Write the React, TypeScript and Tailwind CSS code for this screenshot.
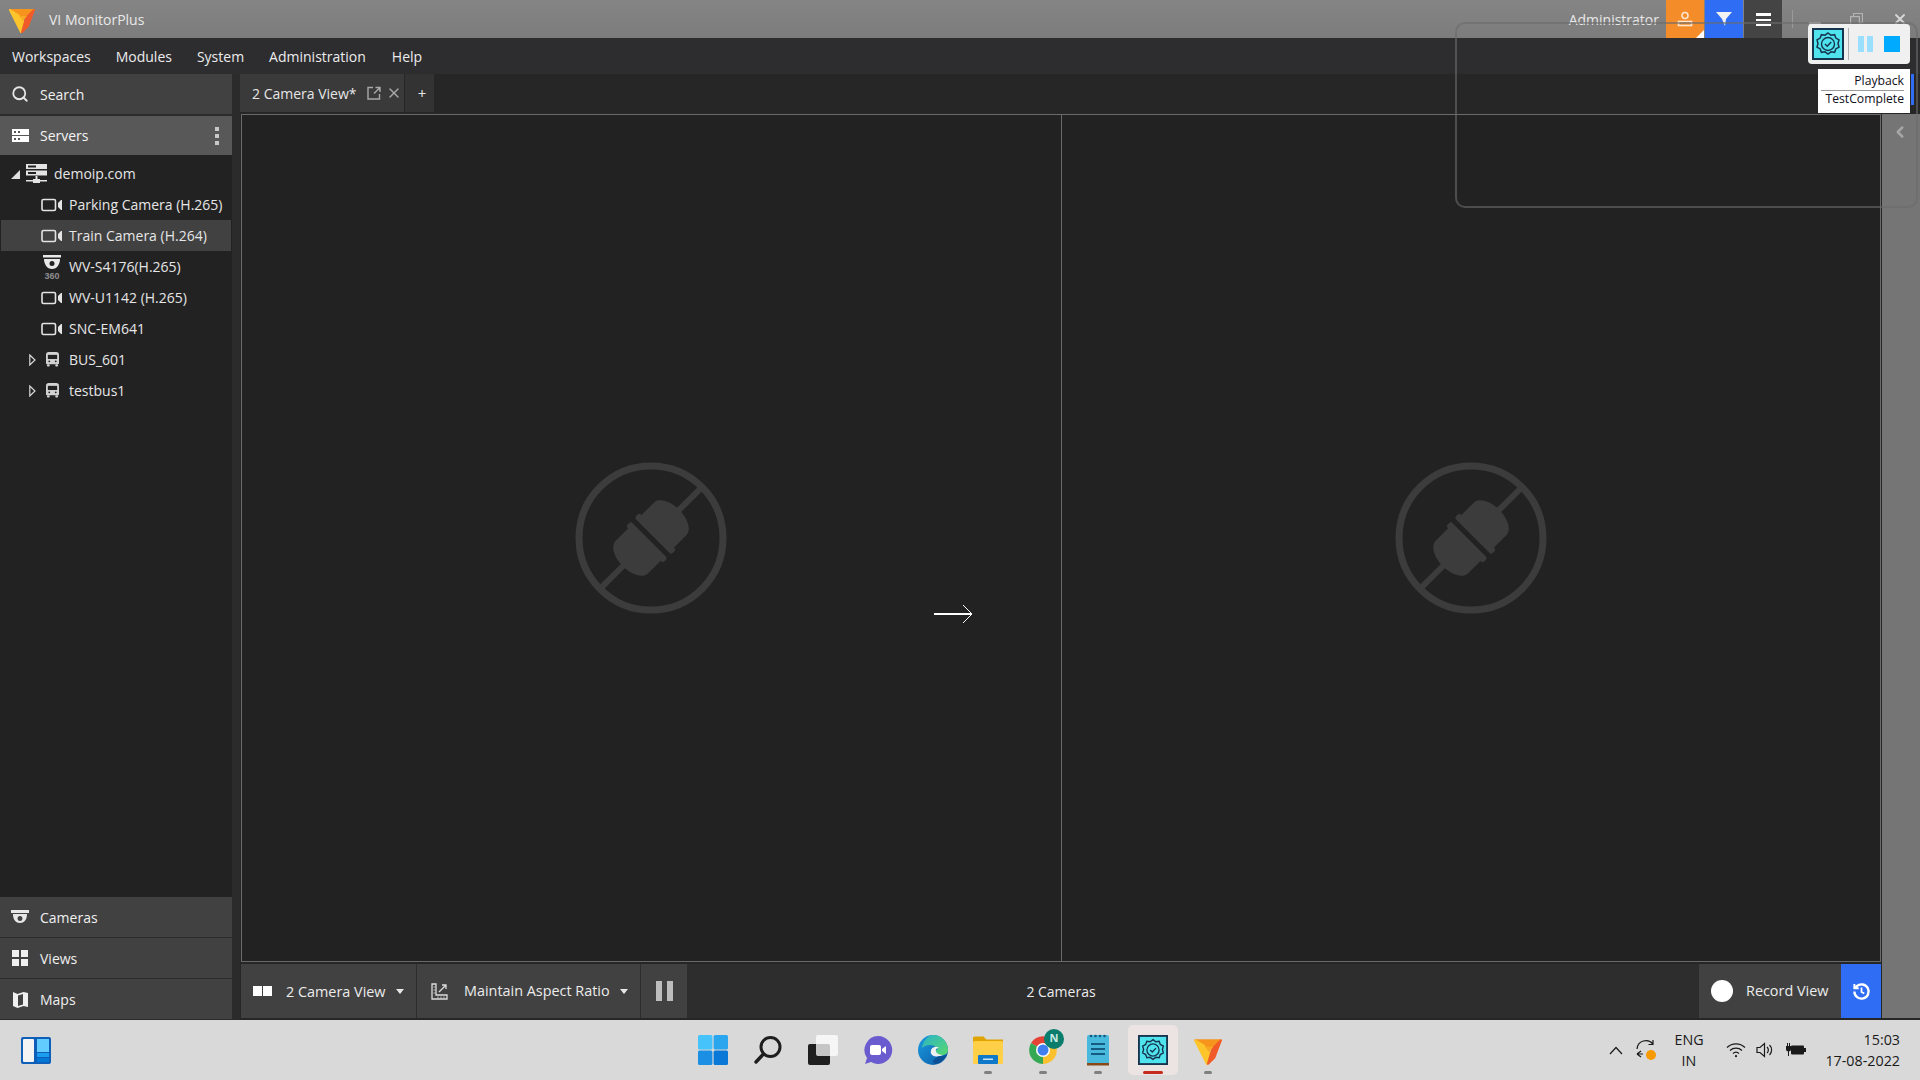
import { ChevronLeft, Search, X } from 'lucide-react';

const font = { fontFamily: '"Open Sans", "Noto Sans", sans-serif' };

function Logo({ size = 30 }: { size?: number }) {
  return (
    <svg width={size} height={size} viewBox="0 0 30 30" strokeLinejoin="round">
      <polygon points="3,6 27,6 23,13 11,12" fill="#f7941d" stroke="#f7941d" strokeWidth="2" />
      <polygon points="3,6 11,11 17,18 14,28" fill="#fdc52c" stroke="#fdc52c" strokeWidth="2" />
      <polygon points="27,6 21,22 15,28 19,14" fill="#f15a29" stroke="#f15a29" strokeWidth="2" />
      <polygon points="12,12 20,12 16,17" fill="#f9a825" />
    </svg>
  );
}

function CameraIcon() {
  return (
    <svg width="22" height="14" viewBox="0 0 22 14" fill="none" stroke="#e4e4e4" strokeWidth="1.6">
      <rect x="1" y="1.5" width="13.5" height="11" rx="1.5" />
      <path d="M17 5 l3-3 h1 v10 h-1 l-3-3 z" fill="#e4e4e4" stroke="none" />
    </svg>
  );
}

function DomeIcon() {
  return (
    <svg width="20" height="24" viewBox="0 0 20 24">
      <rect x="1" y="0" width="18" height="2.5" fill="#e8e8e8" />
      <path d="M2 4 h16 c0 5 -3 10 -8 10 s-8 -5 -8 -10 z" fill="#e8e8e8" />
      <circle cx="10" cy="8.5" r="2.5" fill="#222222" />
      <text x="10" y="23.5" fontSize="9" fontWeight="700" textAnchor="middle" fill="#8f8f8f" fontFamily="Liberation Sans, sans-serif">360</text>
    </svg>
  );
}

function BusIcon() {
  return (
    <svg width="13" height="15" viewBox="0 0 14 16">
      <path d="M3 0 h8 a3 3 0 0 1 3 3 v9 a1 1 0 0 1 -1 1 h-12 a1 1 0 0 1 -1 -1 v-9 a3 3 0 0 1 3 -3 z" fill="#d2d2d2" />
      <rect x="2" y="3" width="10" height="4.5" fill="#222222" />
      <rect x="1" y="13" width="3" height="2.5" rx="1" fill="#d2d2d2" />
      <rect x="10" y="13" width="3" height="2.5" rx="1" fill="#d2d2d2" />
      <circle cx="3.5" cy="10" r="1" fill="#222222" />
      <circle cx="10.5" cy="10" r="1" fill="#222222" />
    </svg>
  );
}

function NetworkIcon() {
  return (
    <svg width="21" height="20" viewBox="0 0 21 20" fill="#e4e4e4">
      <path fillRule="evenodd" d="M0 0 h21 v5 h-21 z M2 1.5 v2 h8 v-2 z" />
      <path fillRule="evenodd" d="M0 6.5 h21 v5 h-21 z M2 8 v2 h8 v-2 z" />
      <rect x="9.5" y="12" width="2" height="4" />
      <rect x="0" y="16" width="21" height="1.5" />
      <rect x="7" y="15" width="7" height="4" />
    </svg>
  );
}

function ServersIcon() {
  return (
    <svg width="17" height="13" viewBox="0 0 17 13" fill="#ffffff">
      <path fillRule="evenodd" d="M0 0 h17 v6 h-17 z M2 2 v2 h2 v-2 z M6 2 v2 h2 v-2 z" />
      <path fillRule="evenodd" d="M0 7 h17 v6 h-17 z M2 9 v2 h2 v-2 z M6 9 v2 h2 v-2 z" />
    </svg>
  );
}

function PlugOff() {
  return (
    <svg width="154" height="154" viewBox="0 0 154 154" fill="#3c3c3c">
      <circle cx="77" cy="77" r="72" fill="none" stroke="#3c3c3c" strokeWidth="7" />
      <g transform="rotate(45 77 77)">
        <rect x="74" y="6" width="6" height="36" />
        <rect x="74" y="112" width="6" height="36" />
        <rect x="51" y="67.5" width="52" height="7" rx="2.5" />
        <path d="M54 70 V50 a23 13 0 0 1 46 0 V70 z" />
        <rect x="51" y="79.5" width="52" height="7" rx="2.5" />
        <path d="M54 84 V104 a23 13 0 0 0 46 0 V84 z" />
      </g>
    </svg>
  );
}

function TestCompleteGear({ size = 32 }: { size?: number }) {
  return (
    <svg width={size} height={size} viewBox="0 0 32 32">
      <rect x="1" y="1" width="30" height="30" fill="#4fe3ee" stroke="#17344f" strokeWidth="2" />
      <path
        d="M16 5 l3 2.2 3.6-.5 1.2 3.4 3.2 1.8-1 3.6 1 3.6-3.2 1.8-1.2 3.4-3.6-.5-3 2.2-3-2.2-3.6.5-1.2-3.4-3.2-1.8 1-3.6-1-3.6 3.2-1.8 1.2-3.4 3.6.5 z"
        fill="none"
        stroke="#17344f"
        strokeWidth="1.5"
      />
      <circle cx="16" cy="16" r="6.5" fill="none" stroke="#17344f" strokeWidth="1.4" />
      <path d="M13 16 l2.2 2.2 4-4.2" fill="none" stroke="#17344f" strokeWidth="1.5" />
    </svg>
  );
}

function SidebarButton({ icon, label }: { icon: React.ReactNode; label: string }) {
  return (
    <div className="flex h-10 items-center bg-[#414141] text-[14px] text-[#f0f0f0]">
      <span className="flex w-[40px] justify-center">{icon}</span>
      {label}
    </div>
  );
}

function TreeRow({ icon, label, selected }: { icon: React.ReactNode; label: string; selected?: boolean }) {
  return (
    <div className={`ml-px mr-px flex h-[31px] items-center pl-[40px] ${selected ? 'bg-[#414141]' : ''}`}>
      <span className="flex w-[22px] justify-center">{icon}</span>
      <span className="ml-[6px]">{label}</span>
    </div>
  );
}

function ExpandRow({ label }: { label: string }) {
  return (
    <div className="ml-px mr-px flex h-[31px] items-center pl-[28px]">
      <svg width="7" height="12" viewBox="0 0 7 12" fill="none" stroke="#d8d8d8" strokeWidth="1.2">
        <path d="M.8 1 L6 6 L.8 11 z" />
      </svg>
      <span className="ml-[8px] flex w-[16px] justify-center">
        <BusIcon />
      </span>
      <span className="ml-[9px]">{label}</span>
    </div>
  );
}

function Sidebar() {
  return (
    <aside className="flex w-[232px] flex-col pb-px">
      <div className="flex h-10 items-center bg-[#414141] text-[14px] text-[#f0f0f0]">
        <span className="flex w-[40px] justify-center">
          <Search size={18} strokeWidth={2.4} color="#e6e6e6" />
        </span>
        Search
      </div>
      <div className="mt-[2px] flex h-[39px] items-center bg-[#585858] text-[14px] text-[#f4f4f4]">
        <span className="flex w-[40px] justify-center">
          <ServersIcon />
        </span>
        Servers
        <span className="ml-auto mr-[13px] flex flex-col gap-[3px]">
          <i className="block h-[4px] w-[4px] bg-[#c8c8c8]" />
          <i className="block h-[4px] w-[4px] bg-[#c8c8c8]" />
          <i className="block h-[4px] w-[4px] bg-[#c8c8c8]" />
        </span>
      </div>
      <div className="flex-1 bg-[#222222] pt-[3px] text-[14px] text-[#e6e6e6]">
        <div className="flex h-[31px] items-center pl-[11px]">
          <span className="mt-[2px] h-0 w-0 border-b-[9px] border-l-[9px] border-b-[#e0e0e0] border-l-transparent" />
          <span className="ml-[6px]">
            <NetworkIcon />
          </span>
          <span className="ml-[7px]">demoip.com</span>
        </div>
        <TreeRow icon={<CameraIcon />} label="Parking Camera (H.265)" />
        <TreeRow icon={<CameraIcon />} label="Train Camera (H.264)" selected />
        <TreeRow icon={<DomeIcon />} label="WV-S4176(H.265)" />
        <TreeRow icon={<CameraIcon />} label="WV-U1142 (H.265)" />
        <TreeRow icon={<CameraIcon />} label="SNC-EM641" />
        <ExpandRow label="BUS_601" />
        <ExpandRow label="testbus1" />
      </div>
      <div className="flex flex-col gap-px">
        <SidebarButton
          label="Cameras"
          icon={
            <svg width="18" height="14" viewBox="0 0 18 14" fill="#e8e8e8">
              <rect x="0" y="0" width="18" height="3" />
              <path fillRule="evenodd" d="M2 4 h14 c0 6 -3 9 -7 9 s-7 -3 -7 -9 z M9 6 a2.5 2.5 0 1 0 .01 0 z" />
            </svg>
          }
        />
        <SidebarButton
          label="Views"
          icon={
            <svg width="16" height="16" viewBox="0 0 16 16" fill="#f0f0f0">
              <rect width="7" height="7" />
              <rect x="9" width="7" height="7" />
              <rect y="9" width="7" height="7" />
              <rect x="9" y="9" width="7" height="7" />
            </svg>
          }
        />
        <SidebarButton
          label="Maps"
          icon={
            <svg width="15" height="17" viewBox="0 0 15 17">
              <path d="M0 1 l4.5 2 6 -2 4.5 1 v14 l-4.5 -1 -6 2 -4.5 -2 z" fill="#f0f0f0" />
              <path d="M5 4.5 l5 -1.5 v10.5 l-5 1.5 z" fill="#414141" />
            </svg>
          }
        />
      </div>
    </aside>
  );
}

function Viewer() {
  return (
    <div className="ml-px mt-[2px] flex h-[848px] w-[1640px] border border-[#6a6a6a] bg-[#222222]">
      <div className="flex flex-1 items-center justify-center border-r border-[#6a6a6a]">
        <PlugOff />
      </div>
      <div className="flex flex-1 items-center justify-center">
        <PlugOff />
      </div>
    </div>
  );
}

function BottomBar() {
  return (
    <div className="ml-px mt-[2px] flex h-[54px] w-[1640px] items-stretch bg-[#2d2d2d] text-[14.4px] text-[#ececec]">
      <div className="flex w-[176px] items-center border-r border-[#2d2d2d] bg-[#414141] pl-[12px]">
        <span className="flex gap-px">
          <i className="block h-[10px] w-[9px] bg-white" />
          <i className="block h-[10px] w-[9px] bg-white" />
        </span>
        <span className="ml-[14px] mt-px">2 Camera View</span>
        <span className="ml-[10px] h-0 w-0 border-x-[4px] border-t-[5px] border-x-transparent border-t-[#e8e8e8]" />
      </div>
      <div className="flex w-[224px] items-center border-r border-[#2d2d2d] bg-[#414141] pl-[14px]">
        <svg width="17" height="17" viewBox="0 0 17 17" fill="none" stroke="#dcdcdc" strokeWidth="1.3">
          <path d="M1 1 h4 v11 h11 v4 h-15 z" />
          <path d="M8 9 l7 -7 m-4 0 h4 v4" />
          <path d="M2.5 4 h2 M2.5 7 h2 M2.5 10 h2 M7 15.5 v-2 M10 15.5 v-2 M13 15.5 v-2" strokeWidth=".8" />
        </svg>
        <span className="ml-[16px]">Maintain Aspect Ratio</span>
        <span className="ml-[10px] h-0 w-0 border-x-[4px] border-t-[5px] border-x-transparent border-t-[#e8e8e8]" />
      </div>
      <div className="flex w-[46px] items-center justify-center gap-[5px] bg-[#414141]">
        <i className="block h-[20px] w-[6px] bg-[#bdbdbd]" />
        <i className="block h-[20px] w-[6px] bg-[#bdbdbd]" />
      </div>
      <div className="flex flex-1 items-center justify-center pr-[264px] text-[14px]">2 Cameras</div>
      <div className="flex w-[142px] items-center bg-[#414141] pl-[12px]">
        <i className="block h-[22px] w-[22px] rounded-full bg-white" />
        <span className="ml-[13px]">Record View</span>
      </div>
      <div className="flex w-[40px] items-center justify-center bg-[#2f6df5]">
        <svg width="19" height="19" viewBox="0 0 24 24" fill="none" stroke="#ffffff" strokeWidth="3">
          <path d="M3 12 a9 9 0 1 0 3 -6.7 L3 8" />
          <path d="M3 2.5 V8 h5.5" strokeWidth="2.5" />
          <path d="M12 7 v5.5 l3.5 2" strokeWidth="2.2" />
        </svg>
      </div>
    </div>
  );
}

function Main() {
  return (
    <main className="ml-[8px] flex flex-1 flex-col bg-[#262626]">
      <div className="flex h-[38px] text-[14px] text-[#e6e6e6]">
        <div className="flex w-[164px] items-center bg-[#3a3a3a] pl-[12px]">
          2 Camera View*
          <svg className="ml-[10px]" width="14" height="14" viewBox="0 0 14 14" fill="none" stroke="#a8a8a8" strokeWidth="1.4">
            <path d="M12.5 8 v5 h-11.5 v-11.5 h5 M7 7.5 l6 -6 m-4.5 0 h4.5 v4.5" />
          </svg>
          <X className="ml-[5px]" size={16} strokeWidth={2} color="#a8a8a8" />
        </div>
        <div className="ml-px flex w-[29px] items-center justify-center bg-[#333333] pl-[5px] text-[15px]">+</div>
      </div>
      <div className="flex flex-1">
        <div className="flex flex-col">
          <Viewer />
          <BottomBar />
        </div>
        <div className="ml-px mt-[2px] mb-[2px] flex-1 bg-[#757575] pt-[9px] pl-[9px]">
          <ChevronLeft size={18} strokeWidth={3.4} color="#a6a6a6" />
        </div>
      </div>
    </main>
  );
}

function TitleBar() {
  return (
    <header className="flex h-[38px] items-stretch bg-gradient-to-b from-[#858585] to-[#7c7c7c] text-[14px] text-[#e8e8e8]">
      <span className="ml-[7px] flex items-center">
        <Logo />
      </span>
      <span className="ml-[12px] flex items-center">VI MonitorPlus</span>
      <span className="ml-auto flex items-center">Administrator</span>
      <div className="relative ml-[7px] flex w-[38px] items-center justify-center bg-[#f58c2a]">
        <svg width="16" height="16" viewBox="0 0 16 16" fill="none" stroke="#ffe6cc" strokeWidth="1.6">
          <circle cx="8" cy="4.5" r="3" />
          <rect x="1.5" y="10.5" width="13" height="4" />
        </svg>
        <span className="absolute bottom-0 right-0 h-0 w-0 border-b-[8px] border-l-[8px] border-b-white border-l-transparent" />
      </div>
      <div className="ml-px flex w-[38px] items-center justify-center bg-[#2f6df5]">
        <svg width="16" height="16" viewBox="0 0 16 16">
          <path d="M0 1 h16 l-6 7 l-1 7 l-3 -7 z" fill="#f2f2f2" />
          <path d="M6.5 7 l2.5 8 l-3 -7 z" fill="#c4d6fb" />
        </svg>
      </div>
      <div className="ml-px flex w-[38px] items-center justify-center bg-[#444444]">
        <span className="flex flex-col gap-[3px]">
          <i className="block h-[3px] w-[15px] bg-white" />
          <i className="block h-[2px] w-[15px] bg-white" />
          <i className="block h-[2px] w-[15px] bg-white" />
        </span>
      </div>
      <div className="flex w-[138px] items-center pl-[10px]">
        <i className="block h-[18px] w-px bg-[#9a9a9a]" />
        <i className="ml-[16px] mt-[8px] block h-[3px] w-[12px] bg-[#c8c8c8]" />
        <svg className="ml-[29px]" width="13" height="13" viewBox="0 0 13 13" fill="none" stroke="#b4b4b4" strokeWidth="1.2">
          <rect x=".6" y="3.6" width="8.8" height="8.8" />
          <path d="M3.5 3.5 v-3 h9 v9 h-3" />
        </svg>
        <X className="ml-[29px]" size={16} strokeWidth={2.8} color="#d6d6d6" />
      </div>
    </header>
  );
}

function MenuBar() {
  return (
    <nav className="flex h-[36px] items-center gap-[25px] bg-[#2d2d30] pl-[12px] text-[14px] text-[#ececec]">
      <span>Workspaces</span>
      <span>Modules</span>
      <span>System</span>
      <span>Administration</span>
      <span className="ml-px">Help</span>
    </nav>
  );
}

function TestCompleteFloat() {
  return (
    <>
      <div className="absolute left-[1455px] top-[22px] h-[186px] w-[463px] rounded-[10px] border-2 border-[#6a6a6a]/60" />
      <i className="absolute left-[1911px] top-[74px] block h-[31px] w-[3px] bg-[#2f6df5]" />
      <div className="absolute left-[1808px] top-[24px] flex h-[40px] w-[102px] items-center rounded-[4px] bg-[#f0f0f0] pl-[4px]">
        <TestCompleteGear />
        <i className="ml-[4px] block h-[32px] w-px bg-[#b0b0b0]" />
        <span className="ml-[9px] flex gap-[3px]">
          <i className="block h-[16px] w-[6px] bg-[#9adfff]" />
          <i className="block h-[16px] w-[6px] bg-[#9adfff]" />
        </span>
        <i className="ml-[11px] block h-[16px] w-[16px] bg-[#00aaff]" />
      </div>
      <div className="absolute left-[1818px] top-[69px] h-[44px] w-[92px] bg-white pl-[3px] pr-[6px] text-right text-[12.2px] leading-[18px] text-[#101020]">
        <div className="mt-[3px] border-b border-[#9a9a9a]">Playback</div>
        <div className="mt-[-1px]">TestComplete</div>
      </div>
      <svg className="absolute left-[934px] top-[604px]" width="40" height="20" viewBox="0 0 40 20">
        <path d="M0 10 H38" stroke="#ffffff" strokeWidth="2" />
        <path d="M29 1 L38 10 L29 19" fill="none" stroke="#ffffff" strokeWidth="1" />
      </svg>
    </>
  );
}

function TaskbarApp({ children, dot, active }: { children: React.ReactNode; dot?: boolean; active?: boolean }) {
  return (
    <div className={`relative flex h-[50px] w-[50px] items-center justify-center rounded-[5px] ${active ? 'bg-[#ece3e3]' : ''}`}>
      {children}
      {dot && <i className="absolute bottom-[1px] left-[21px] block h-[3px] w-[8px] rounded-full bg-[#808080]" />}
      {active && <i className="absolute bottom-[1px] left-[15px] block h-[3px] w-[20px] rounded-full bg-[#c42b1c]" />}
    </div>
  );
}

function Taskbar() {
  return (
    <footer className="relative flex h-[60px] items-center justify-center bg-[#d9d9d9]">
      <svg className="absolute left-[21px] top-[17px]" width="30" height="27" viewBox="0 0 30 27">
        <rect width="30" height="27" rx="2" fill="#0f5fb8" />
        <rect x="2" y="2" width="11" height="23" rx="1" fill="#f4f4f4" />
        <rect x="16" y="2" width="12" height="13" fill="#63ccff" />
        <rect x="16" y="16" width="12" height="4" fill="#1a9cf0" />
        <rect x="16" y="21" width="12" height="4" fill="#0078d4" />
      </svg>

      <div className="ml-[1px] mt-[-1px] flex gap-[5px]">
        <TaskbarApp>
          <svg width="30" height="30" viewBox="0 0 30 30">
            <rect width="14.4" height="14.4" x="0" y="0" rx="1.5" fill="#45c3fa" />
            <rect width="14.4" height="14.4" x="15.6" y="0" rx="1.5" fill="#2aa6ee" />
            <rect width="14.4" height="14.4" x="0" y="15.6" rx="1.5" fill="#1a8fe3" />
            <rect width="14.4" height="14.4" x="15.6" y="15.6" rx="1.5" fill="#0a78d6" />
          </svg>
        </TaskbarApp>
        <TaskbarApp>
          <svg width="30" height="30" viewBox="0 0 30 30" fill="none" stroke="#1e1e1e">
            <circle cx="17.5" cy="12" r="9.5" strokeWidth="3" />
            <path d="M10.5 19 L3 27" strokeWidth="3.4" strokeLinecap="round" />
          </svg>
        </TaskbarApp>
        <TaskbarApp>
          <svg width="30" height="30" viewBox="0 0 30 30">
            <rect x="0" y="9" width="22" height="21" rx="2" fill="#1f1f1f" />
            <rect x="8" y="0" width="22" height="21" rx="2" fill="#ffffff" fillOpacity=".75" />
          </svg>
        </TaskbarApp>
        <TaskbarApp>
          <svg width="30" height="30" viewBox="0 0 30 30">
            <path d="M15 1 a14 14 0 1 1 -7 26 l-6 2 2 -6 A14 14 0 0 1 15 1 z" fill="#6a5ccf" />
            <rect x="7" y="10" width="11" height="10" rx="2" fill="#ffffff" />
            <path d="M19 14 l4 -3 v8 l-4 -3 z" fill="#ffffff" />
          </svg>
        </TaskbarApp>
        <TaskbarApp>
          <svg width="30" height="30" viewBox="0 0 30 30">
            <defs>
              <linearGradient id="edgeBody" x1="0" y1="0" x2="1" y2="1">
                <stop offset="0" stopColor="#1b9de2" />
                <stop offset="1" stopColor="#0c59a4" />
              </linearGradient>
              <linearGradient id="edgeTop" x1="0" y1="0" x2="1" y2="1">
                <stop offset="0" stopColor="#2bb5c8" />
                <stop offset="1" stopColor="#5ad86c" />
              </linearGradient>
            </defs>
            <circle cx="15" cy="15" r="15" fill="url(#edgeBody)" />
            <path d="M15 0 a15 15 0 0 1 15 15 c0 5 -6 6 -11 5 c-3 -1 -2 -5 1 -6 c-3 -5 -12 -5 -16 -1 C5 6 10 0 15 0 z" fill="url(#edgeTop)" />
            <path d="M13 15 a5 5 0 0 1 8 -2 q-4 0 -3 4 q2 3 7 3 q-7 3 -11 0 q-2 -2 -1 -5 z" fill="#f0f0f0" />
            <path d="M21 21 q5 1 8 -2 q-4 9 -12 10 q-5 -3 4 -8 z" fill="#0d4f94" />
          </svg>
        </TaskbarApp>
        <TaskbarApp dot>
          <svg width="30" height="28" viewBox="0 0 30 28">
            <path d="M0 2 a1.5 1.5 0 0 1 1.5 -1.5 h9 l3 3 h16.5 v8 h-30 z" fill="#e0a400" />
            <rect y="5" width="30" height="23" rx="1.5" fill="#ffcf48" />
            <rect x="5" y="19" width="20" height="9" rx="1" fill="#0f78c8" />
            <rect x="10" y="22.5" width="10" height="1.5" fill="#c8e4f8" />
          </svg>
        </TaskbarApp>
        <TaskbarApp dot>
          <span className="relative flex">
            <svg width="28" height="28" viewBox="0 0 28 28">
              <path d="M14 14 L26 7 A14 14 0 0 0 2 7 z" fill="#e34234" />
              <path d="M14 14 L2 7 A14 14 0 0 0 14 28 z" fill="#34a853" />
              <path d="M14 14 L14 28 A14 14 0 0 0 26 7 z" fill="#fbc02d" />
              <circle cx="14" cy="14" r="7" fill="#ffffff" />
              <circle cx="14" cy="14" r="5.5" fill="#3f7ff0" />
            </svg>
            <span className="absolute left-[15px] top-[-7px] flex h-[20px] w-[20px] items-center justify-center rounded-full bg-[#0a7d6c] text-[11px] font-bold text-[#cdeae4]">
              N
            </span>
          </span>
        </TaskbarApp>
        <TaskbarApp dot>
          <svg width="22" height="32" viewBox="0 0 22 32">
            <rect y="1" width="22" height="30" rx="2" fill="#49b8dd" />
            <rect y="29" width="22" height="2.5" fill="#8a4a18" />
            <g fill="#155a80">
              <circle cx="4" cy="2" r="1.3" />
              <circle cx="8.5" cy="2" r="1.3" />
              <circle cx="13" cy="2" r="1.3" />
              <circle cx="17.5" cy="2" r="1.3" />
              <rect x="4" y="9" width="14" height="2" />
              <rect x="4" y="14" width="14" height="2" />
              <rect x="4" y="19" width="14" height="2" />
            </g>
          </svg>
        </TaskbarApp>
        <TaskbarApp active>
          <TestCompleteGear size={30} />
        </TaskbarApp>
        <TaskbarApp dot>
          <Logo size={32} />
        </TaskbarApp>
      </div>

      <div className="absolute right-[20px] top-0 flex h-full items-center text-[14.3px] text-[#1a1a1a]">
        <svg width="14" height="9" viewBox="0 0 14 9" fill="none" stroke="#1a1a1a" strokeWidth="1.2">
          <path d="M1 8 L7 1.5 L13 8" />
        </svg>
        <svg className="ml-[13px]" width="22" height="22" viewBox="0 0 22 22" fill="none" stroke="#1a1a1a" strokeWidth="1.2">
          <path d="M1 10 a9 9 0 0 1 16 -5 M17 1 v4.5 h-4.5" />
          <path d="M1 15 l4 -3 M1 15 l4 3 M1 15 h6 " />
          <circle cx="15" cy="16" r="5" fill="#f79a00" stroke="none" />
        </svg>
        <div className="ml-[9px] flex w-[44px] flex-col items-center leading-[21px]">
          <span>ENG</span>
          <span>IN</span>
        </div>
        <svg className="ml-[15px]" width="20" height="16" viewBox="0 0 20 16" fill="none" stroke="#1a1a1a" strokeWidth="1.3">
          <path d="M1 5.5 a13 13 0 0 1 18 0 M4 8.5 a9 9 0 0 1 12 0 M7 11.5 a4.5 4.5 0 0 1 6 0" />
          <circle cx="10" cy="14.2" r="1.1" fill="#1a1a1a" stroke="none" />
        </svg>
        <svg className="ml-[10px]" width="20" height="16" viewBox="0 0 20 16" fill="none" stroke="#1a1a1a" strokeWidth="1.2">
          <path d="M1 5.5 h3 l4.5 -4 v13 l-4.5 -4 h-3 z" />
          <path d="M11 5 a4 4 0 0 1 0 6 M13.5 3 a7 7 0 0 1 0 10" />
        </svg>
        <svg className="ml-[10px]" width="20" height="16" viewBox="0 0 20 16" fill="#1a1a1a">
          <rect x="5" y="3.5" width="13" height="9" rx="1" />
          <rect x="18" y="6" width="2" height="4" />
          <path d="M0 4 h5 v3 a2.5 2.5 0 0 1 -5 0 z M1 1 h1 v3 h-1 z M3 1 h1 v3 h-1 z M2 9 h1 v5 h-1 z" />
        </svg>
        <div className="ml-[16px] flex w-[78px] flex-col items-end leading-[21px]">
          <span>15:03</span>
          <span>17-08-2022</span>
        </div>
      </div>
    </footer>
  );
}

export default function App() {
  return (
    <div style={font} className="relative flex h-[1080px] w-[1920px] flex-col overflow-hidden bg-[#2b2b2b]">
      <TitleBar />
      <MenuBar />
      <div className="flex min-h-0 flex-1">
        <Sidebar />
        <Main />
      </div>
      <Taskbar />
      <TestCompleteFloat />
    </div>
  );
}
